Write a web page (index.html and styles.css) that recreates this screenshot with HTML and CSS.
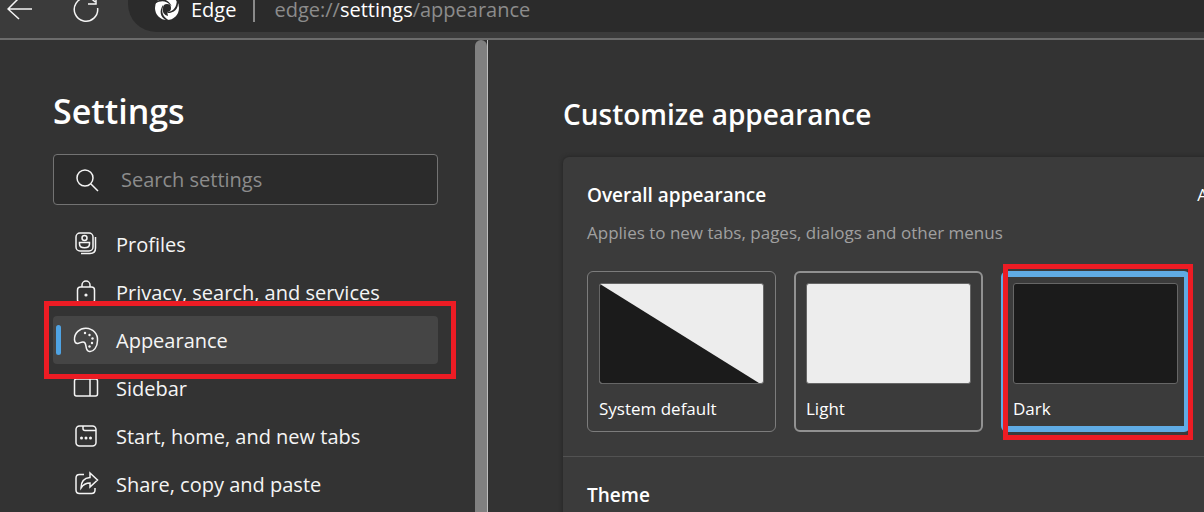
FILE: index.html
```html
<!DOCTYPE html>
<html lang="en">
<head>
<meta charset="utf-8">
<title>Settings</title>
<link rel="stylesheet" href="styles.css">
</head>
<body>
<header class="toolbar">
  <button class="tool back" aria-label="Back">
    <svg width="26" height="22" viewBox="0 0 26 22"><path d="M25 9H1M12-2 1 9l11 10"/></svg>
  </button>
  <button class="tool refresh" aria-label="Refresh">
    <svg width="28" height="22" viewBox="0 0 28 22"><path d="M25.6 8A11.7 11.7 0 1 1 23 2M24-4v8h-8"/></svg>
  </button>
  <div class="address">
    <svg class="logo" width="26" height="22" viewBox="0 0 26 22">
      <circle cx="13" cy="9" r="12" fill="#fff"/>
      <circle cx="13" cy="9" r="4" fill="#2b2b2b"/>
      <g fill="#2b2b2b">
        <path id="cut" d="M9 8C7 13 9 18 15 21.500L12.500 21.500C6 18 5 12 9 6Z"/>
        <use href="#cut" transform="rotate(120 13 9)"/>
        <use href="#cut" transform="rotate(240 13 9)"/>
        <path d="M9 9C8 13 10 16 14 17L13 12Z"/>
      </g>
    </svg>
    <span class="site">Edge</span>
    <span class="divider"></span>
    <span class="url">edge://<b>settings</b>/appearance</span>
  </div>
</header>
<div class="page">
  <aside class="sidebar">
    <div class="side-content">
      <h1>Settings</h1>
      <label class="search">
        <svg width="24" height="24" viewBox="0 0 24 24"><circle cx="10" cy="10" r="8"/><path d="m16 16 7 7"/></svg>
        <input type="text" placeholder="Search settings" aria-label="Search settings">
      </label>
      <nav>
        <a href="#profiles"><svg width="26" height="26" viewBox="0 0 26 26"><rect x="3" y="2" width="17" height="18" rx="4"/><circle cx="11.500" cy="7" r="2.500"/><path d="M6.500 11.500h10v1.500c0 5-10 5-10 0zM22.500 6v11q0 5.500-5.500 5.500H8"/></svg>Profiles</a>
        <a href="#privacy"><svg width="26" height="26" viewBox="0 0 26 26"><rect x="4.500" y="8" width="17" height="16" rx="3"/><path d="M9 8V6a4 4 0 0 1 8 0v2"/><circle class="dot" cx="13" cy="16" r="1.600"/></svg>Privacy, search, and services</a>
        <a href="#appearance" class="current" aria-current="page"><svg width="26" height="26" viewBox="0 0 26 26"><path d="M1.500 13C1 6 7 1 13 1.200 20 1.500 25 7 24.500 13.500 24.500 20 20.500 25 16.500 24.500 12 24 14 19 12 16 10 13 7 16.500 4.500 16.500 2 16.500 1.700 15 1.500 13Z"/><g class="dot"><circle cx="12" cy="6" r="1.200"/><circle cx="16.500" cy="8" r="1.200"/><circle cx="19.500" cy="11.500" r="1.200"/><circle cx="19" cy="16" r="1.200"/><circle cx="16.500" cy="19.500" r="1.200"/></g></svg>Appearance</a>
        <a href="#sidebar"><svg width="26" height="26" viewBox="0 0 26 26"><rect x="1.500" y="4" width="23" height="17" rx="2"/><path d="M17 4v17"/></svg>Sidebar</a>
        <a href="#start"><svg width="26" height="26" viewBox="0 0 26 26"><rect x="3" y="3" width="20" height="20" rx="3.500"/><path d="M10 3v2.500q0 2 2 2h11"/><g class="dot"><circle cx="8.500" cy="15" r="1.500"/><circle cx="13" cy="15" r="1.500"/><circle cx="17.500" cy="15" r="1.500"/></g></svg>Start, home, and new tabs</a>
        <a href="#share"><svg width="26" height="26" viewBox="0 0 26 26"><path d="M11 3.500H6.500q-3.500 0-3.500 3.500v12q0 3.500 3.500 3.500h12q3.500 0 3.500-3.500v-2M17 2l7.500 7-7.500 7v-4c-4 0-6.500 1-9 5 0-6 3-10 9-10.500z"/></svg>Share, copy and paste</a>
      </nav>
    </div>
    <div class="scroll-thumb"></div>
  </aside>
  <main>
    <h2>Customize appearance</h2>
    <div class="card">
      <section class="overall">
        <div class="heading"><h3>Overall appearance</h3><span class="more">A</span></div>
        <p>Applies to new tabs, pages, dialogs and other menus</p>
        <div class="themes">
          <label class="theme"><input type="radio" name="theme"><span class="preview"><svg viewBox="0 0 162 99" preserveAspectRatio="none"><path d="M0 0 158 99H0z"/></svg></span>System default</label>
          <label class="theme light"><input type="radio" name="theme"><span class="preview"></span>Light</label>
          <label class="theme dark"><input type="radio" name="theme" checked><span class="preview"></span>Dark</label>
        </div>
      </section>
      <section class="theme-section"><h3>Theme</h3></section>
    </div>
  </main>
</div>
</body>
</html>
```
FILE: styles.css
```css
* { box-sizing: border-box; }
body {
  margin: 0;
  height: 100vh;
  overflow: hidden;
  display: flex;
  flex-direction: column;
  background: #333;
  color: #fff;
  font-family: "Open Sans", "Noto Sans", sans-serif;
  font-size: 20px;
}
h1, h2, h3, p { margin: 0; font-weight: 600; }
svg { display: block; flex: none; fill: none; stroke: #f5f5f5; stroke-width: 1.5; }
.toolbar {
  flex: none;
  display: flex;
  align-items: flex-start;
  padding-left: 7px;
  height: 40px;
  background: #3b3b3b;
  border-bottom: 2px solid #6c6c6c;
}
.tool { padding: 0; border: 0; background: none; color: inherit; }
.refresh { margin-left: 39px; }
.address {
  flex: 1;
  display: flex;
  align-items: center;
  height: 32px;
  margin-left: 28px;
  padding: 0 0 12px 26px;
  border-radius: 0 0 0 28px;
  background: #2b2b2b;
  line-height: 20px;
}
.logo { stroke: none; }
.site { margin-left: 11px; }
.divider { width: 2px; height: 24px; margin: 0 19px 0 17px; background: #8a8a8a; }
.url { color: #8c8c8c; }
.url b { color: #fff; font-weight: 400; }
.page { flex: 1; display: flex; min-height: 0; }
.sidebar { flex: none; display: flex; width: 488px; border-right: 1px solid #bdbdbd; }
.side-content { flex: 1; padding: 48px 37px 0 53px; }
h1 { font-size: 34px; line-height: 46px; }
.search {
  display: flex;
  align-items: center;
  height: 51px;
  margin: 20px 0 15px;
  padding-left: 21px;
  border: 1px solid #737373;
  border-radius: 4px;
  background: #2b2b2b;
}
.search input {
  flex: 1;
  min-width: 0;
  margin-left: 22px;
  padding: 0;
  border: 0;
  outline: 0;
  background: none;
  color: #fff;
  font: inherit;
}
.search input::placeholder { color: #8c8c8c; opacity: 1; }
nav a {
  position: relative;
  display: flex;
  align-items: center;
  gap: 17px;
  height: 48px;
  padding-left: 20px;
  border-radius: 4px;
  color: #f5f5f5;
  text-decoration: none;
}
nav .dot { fill: #f5f5f5; stroke: none; }
nav .current { background: #454545; z-index: 1; }
.current::before {
  content: "";
  position: absolute;
  left: 3px;
  top: 9px;
  width: 5px;
  height: 30px;
  border-radius: 3px;
  background: #4fa3e3;
}
.current::after {
  content: "";
  position: absolute;
  inset: -15px -18px -15px -9px;
  border: 5px solid #ed1c24;
}
.scroll-thumb { width: 12px; border-radius: 6px 6px 0 0; background: #808080; }
main { flex: 1; min-width: 0; padding: 54px 0 0 75px; }
h2 { font-size: 28px; line-height: 40px; }
.card {
  margin: 23px -4px 0 0;
  border-radius: 6px 0 0 0;
  background: #3b3b3b;
  box-shadow: 0 0 4px #222;
}
.overall { padding: 24px 0 24px 24px; border-bottom: 1px solid #525252; }
.heading { display: flex; justify-content: space-between; line-height: 28px; }
h3 { font-size: 19px; line-height: 28px; }
.more { font-size: 17px; }
.overall p { margin: 12px 0 26px; color: #a0a0a0; font-size: 17px; font-weight: 400; line-height: 24px; }
.themes { display: flex; gap: 18px; }
.theme {
  position: relative;
  width: 189px;
  height: 161px;
  padding: 11px;
  border: 1px solid #7c7c7c;
  border-radius: 6px;
  font-size: 17px;
  line-height: 24px;
}
.theme input { position: absolute; margin: 0; opacity: 0; }
.preview {
  display: block;
  height: 101px;
  margin-bottom: 13px;
  border: 1px solid #666;
  border-radius: 3px;
  background: #ededed;
  overflow: hidden;
}
.preview svg { width: 100%; height: 100%; fill: #1b1b1b; stroke: none; }
.light { border-width: 2px; border-color: #919191; padding: 10px; }
.dark { border: 6px solid #60abe4; padding: 6px; }
.dark .preview { background: #1b1b1b; }
.dark::after {
  content: "";
  position: absolute;
  inset: -13px -9px -14px -4px;
  border: 5px solid #ed1c24;
}
.theme-section { padding: 24px 24px 32px; }
```
